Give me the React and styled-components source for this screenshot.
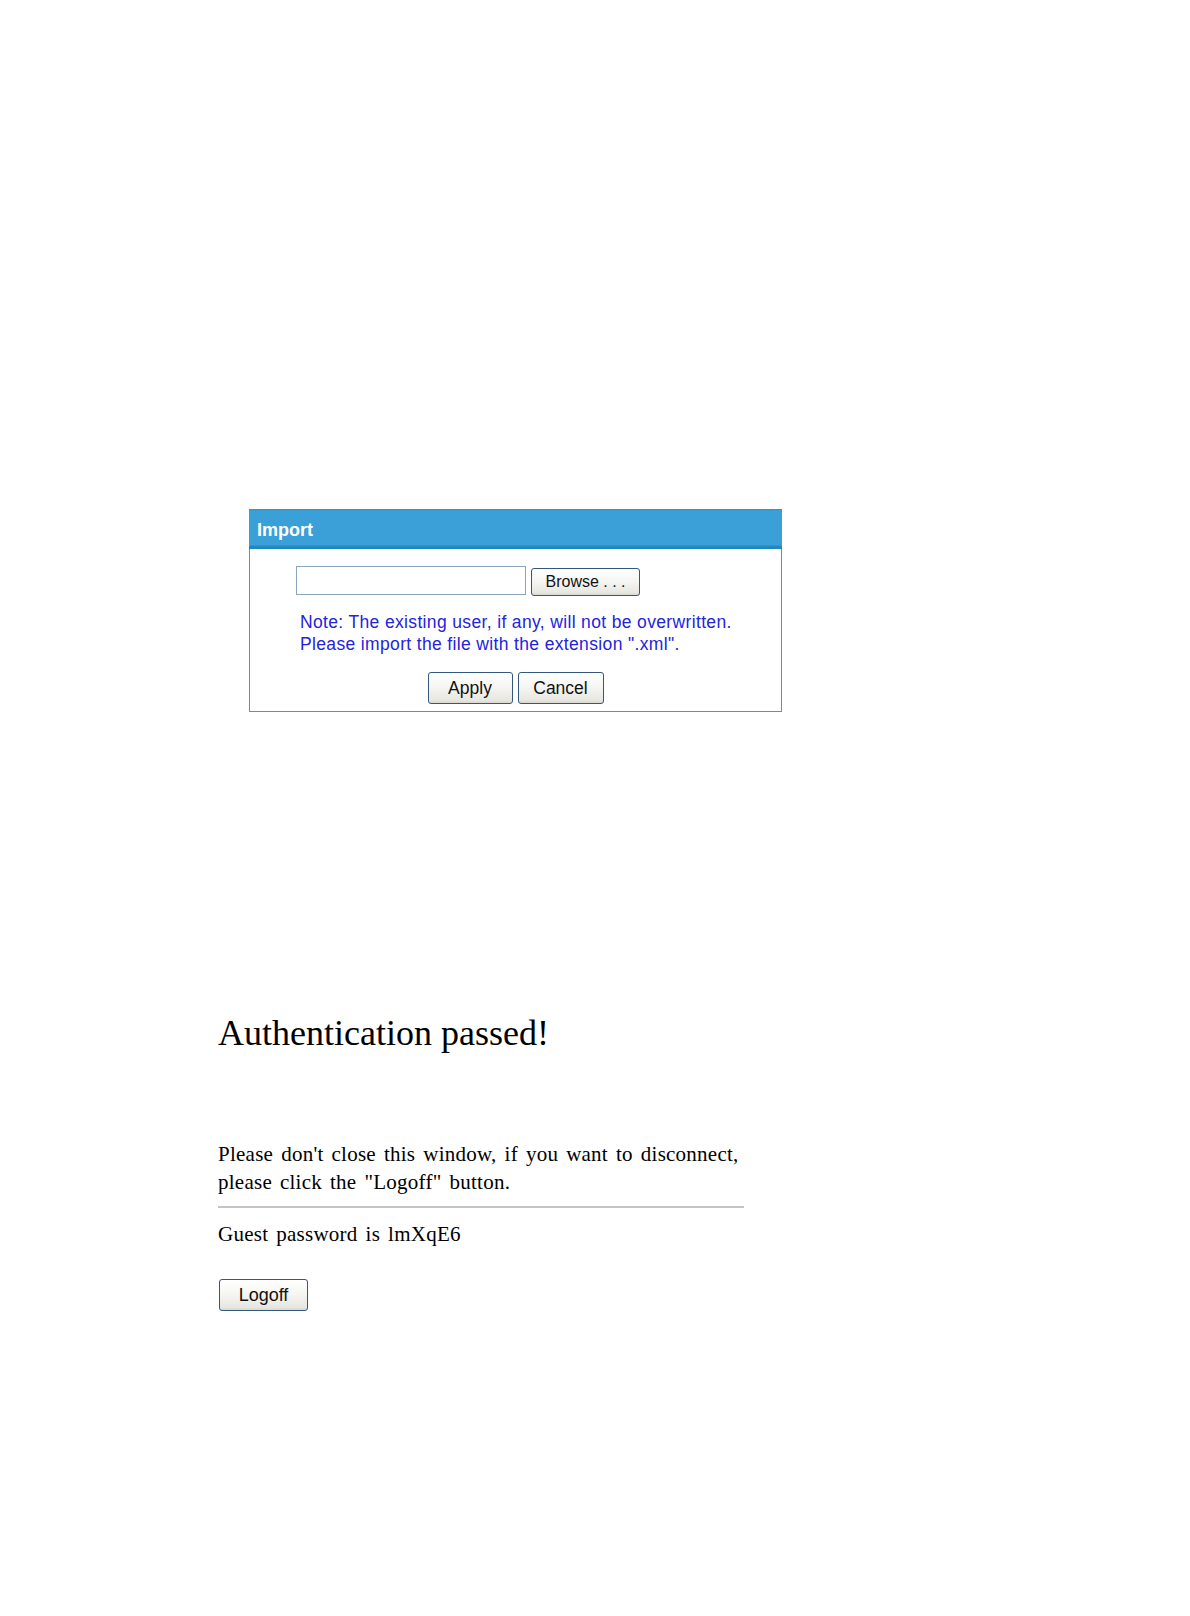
import React from 'react';
import styled, {createGlobalStyle} from 'styled-components';

const GlobalStyle = createGlobalStyle`
  body {
    margin: 0;
    background: #ffffff;
  }
`

const App = () => {
  return (
    <Page>
      <GlobalStyle />
      <ImportPanel>
        <PanelHeader>Import</PanelHeader>
        <PanelBody>
          <FileRow>
            <FileInput type="text" readOnly />
            <Button $w={109} $h={28} $fs={16} $top={2}>Browse . . .</Button>
          </FileRow>
          <Note>
            Note: The existing user, if any, will not be overwritten.<br />
            Please import the file with the extension ".xml".
          </Note>
          <ActionRow>
            <Button $w={85} $h={32} $fs={17.5}>Apply</Button>
            <Button $w={86} $h={32} $fs={17.5}>Cancel</Button>
          </ActionRow>
        </PanelBody>
      </ImportPanel>

      <AuthSection>
        <Title>Authentication passed!</Title>
        <Message>
          Please don't close this window, if you want to disconnect,<br />
          please click the "Logoff" button.
        </Message>
        <Divider />
        <Guest>Guest password is lmXqE6</Guest>
        <LogoffWrap>
          <Button $w={89} $h={32} $fs={18}>Logoff</Button>
        </LogoffWrap>
      </AuthSection>
    </Page>
  );
}

const Page = styled.div`
  display: flex;
  flex-direction: column;
  padding-top: 509px;
  padding-bottom: 300px;
`

const ImportPanel = styled.div`
  margin-left: 249px;
  width: 533px;
  box-sizing: border-box;
  border: 1px solid #3f9bd1;
  border-top: none;
  font-family: "Liberation Sans", Arial, sans-serif;
`

const PanelHeader = styled.div`
  height: 40px;
  box-sizing: border-box;
  margin: 0 -1px;
  padding: 3px 0 0 8px;
  line-height: 37px;
  font-size: 18px;
  font-weight: bold;
  color: #ffffff;
  background: linear-gradient(
    to bottom,
    #2c92cb 0px,
    #3aa1d8 2px,
    #3aa0d7 36px,
    #2489c3 37px,
    #1e84bf 40px
  );
`

const PanelBody = styled.div`
  padding: 17px 0 7px 0;
`

const FileRow = styled.div`
  display: flex;
  align-items: flex-start;
  padding-left: 46px;
  gap: 5px;
`

const FileInput = styled.input`
  width: 230px;
  height: 29px;
  box-sizing: border-box;
  border: 1px solid #8aa4be;
  margin: 0;
  padding: 0 4px;
  background: #ffffff;
  outline: none;
`

const Button = styled.button`
  width: ${p => p.$w}px;
  height: ${p => p.$h}px;
  margin: ${p => p.$top || 0}px 0 0 0;
  padding: 0;
  box-sizing: border-box;
  border: 1px solid #34577c;
  border-radius: 3px;
  background: linear-gradient(to bottom, #ffffff 0%, #f6f6f3 45%, #e8e7e1 90%, #d9d8d0 100%);
  font-family: "Liberation Sans", Arial, sans-serif;
  font-size: ${p => p.$fs}px;
  color: #111111;
  cursor: pointer;
`

const Note = styled.div`
  margin-top: 15px;
  padding-left: 50px;
  font-size: 17.5px;
  letter-spacing: 0.35px;
  line-height: 22px;
  color: #2424de;
`

const ActionRow = styled.div`
  display: flex;
  justify-content: center;
  gap: 5px;
  margin-top: 17px;
`

const AuthSection = styled.div`
  margin-top: 300px;
  margin-left: 218px;
  width: 526px;
  font-family: "Liberation Serif", "Times New Roman", serif;
  color: #000000;
`

const Title = styled.h1`
  margin: 0;
  font-size: 36px;
  font-weight: normal;
  line-height: 42px;
`

const Message = styled.p`
  margin: 86px 0 0 0;
  font-size: 21px;
  line-height: 28px;
  letter-spacing: 0.25px;
  word-spacing: 2.5px;
`

const Divider = styled.div`
  margin-top: 10px;
  height: 2px;
  background: #c4c4c4;
`

const Guest = styled.p`
  margin: 12px 0 0 0;
  font-size: 21px;
  line-height: 28px;
  letter-spacing: 0.25px;
  word-spacing: 2.5px;
`

const LogoffWrap = styled.div`
  display: flex;
  margin-top: 31px;
  padding-left: 1px;
`

export default App;
